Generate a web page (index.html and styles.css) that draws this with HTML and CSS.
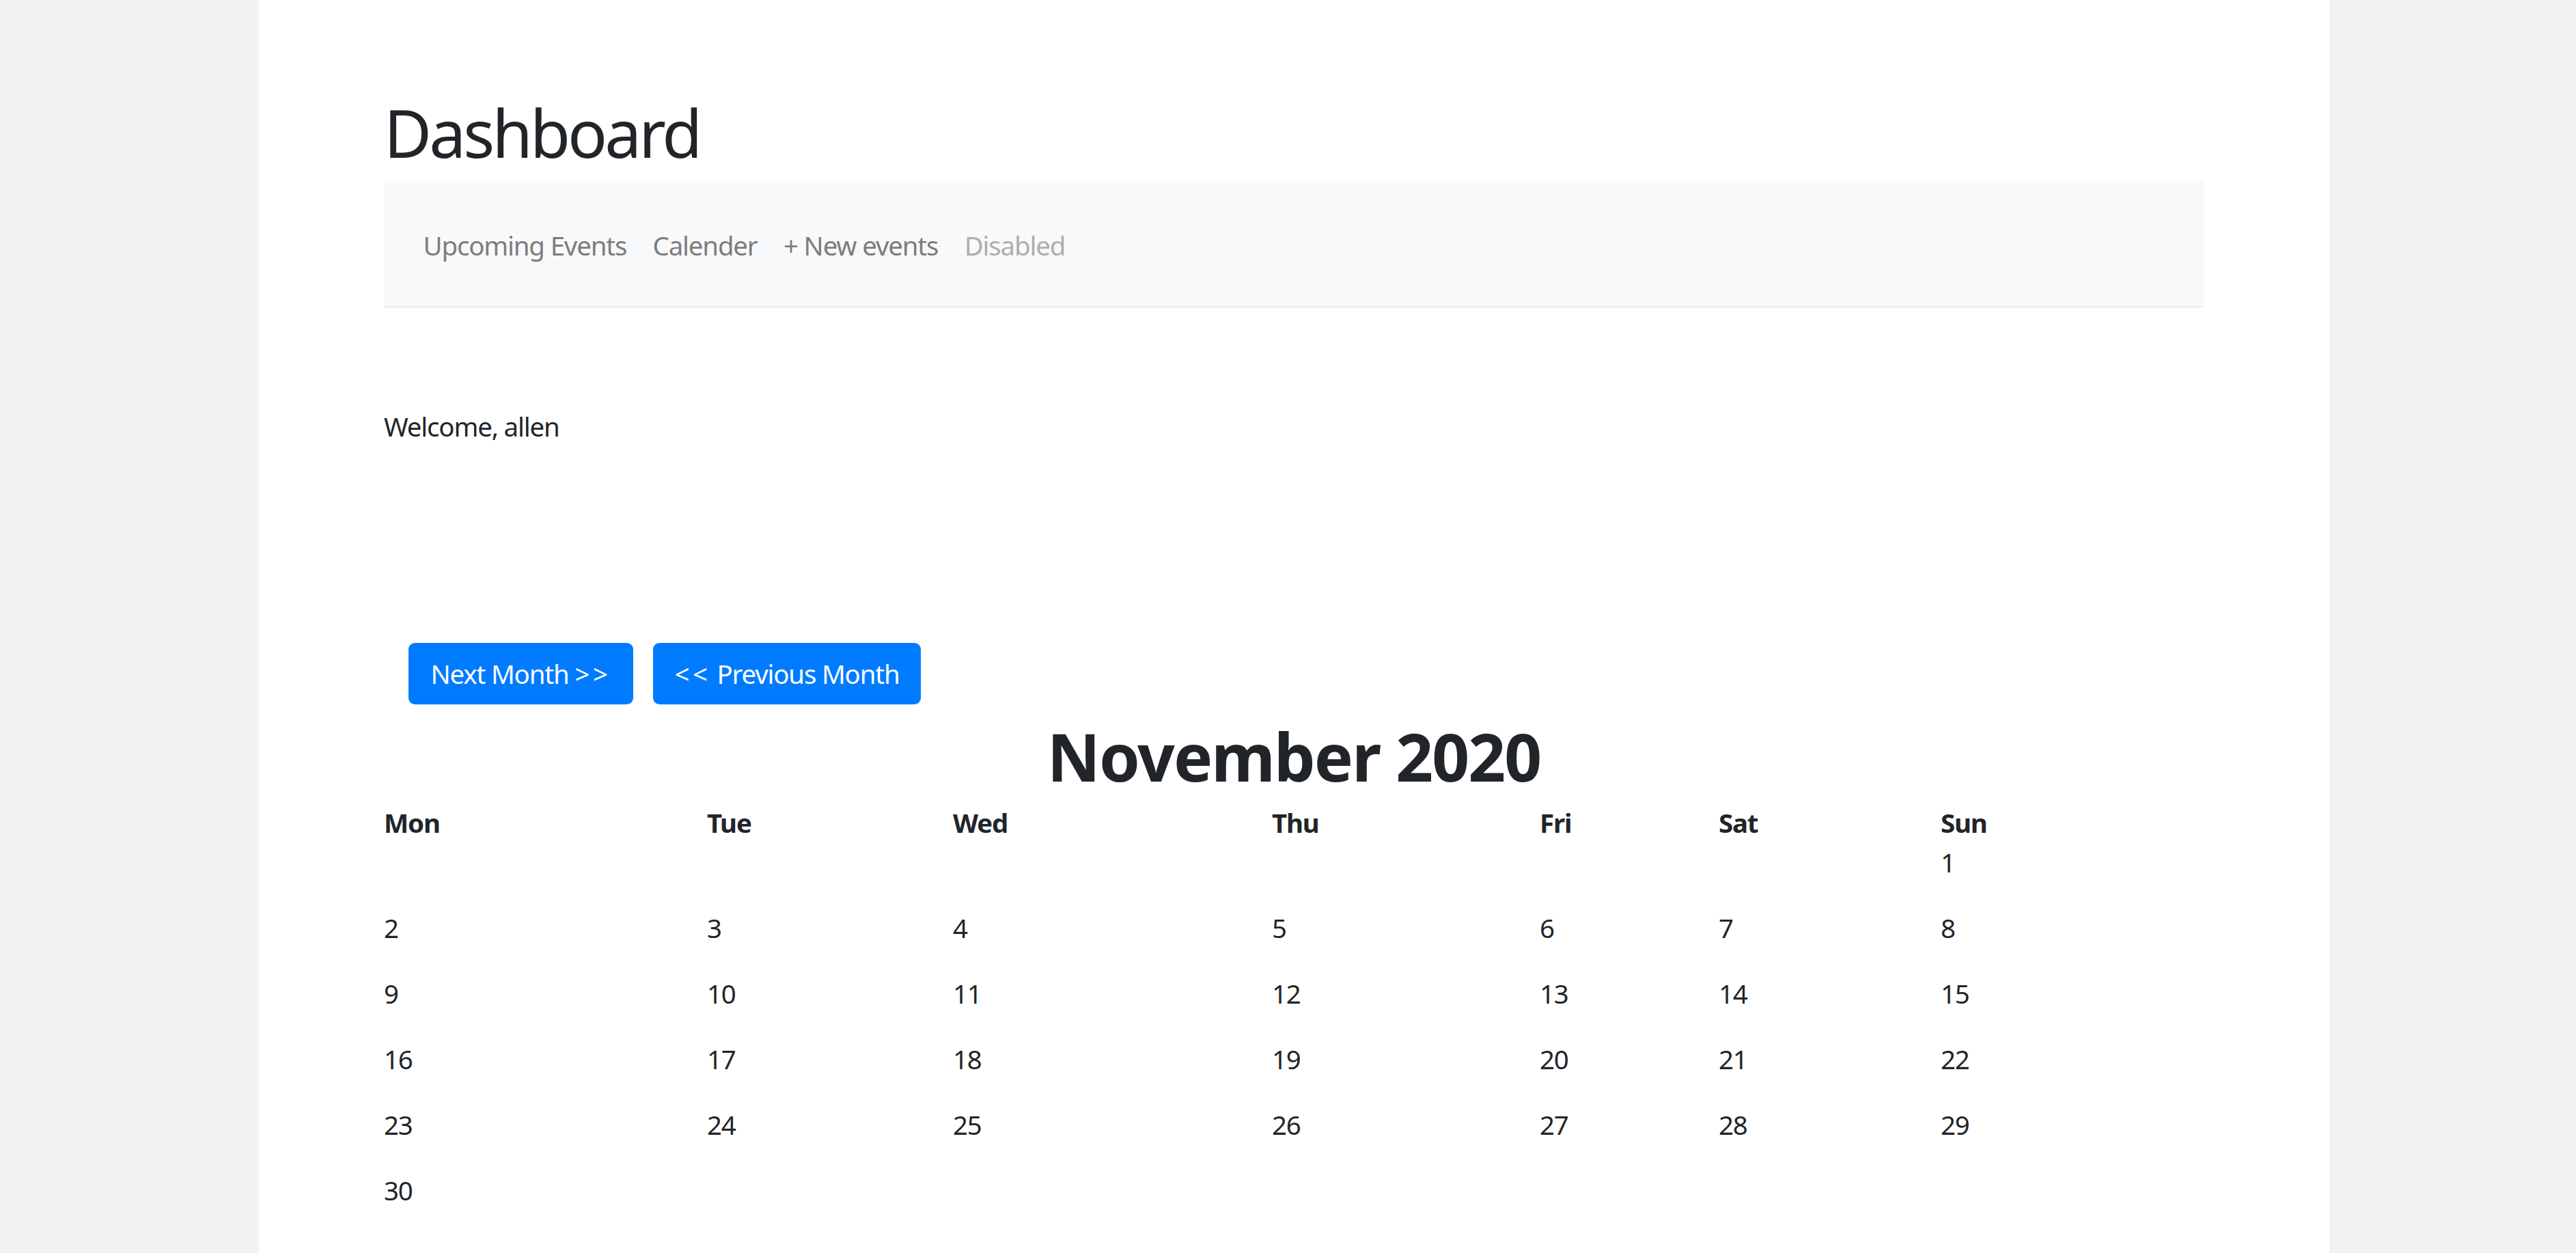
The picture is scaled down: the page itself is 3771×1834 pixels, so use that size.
FILE: index.html
```html
<!DOCTYPE html>
<html lang="en">
<head>
<meta charset="utf-8">
<title>Dashboard</title>
<link rel="stylesheet" href="styles.css">
</head>
<body>
<div class="page">
  <h1 class="title">Dashboard</h1>
  <nav class="navbar">
    <a class="nav-link" href="#">Upcoming Events</a>
    <a class="nav-link" href="#">Calender</a>
    <a class="nav-link" href="#">+ New events</a>
    <span class="nav-link disabled">Disabled</span>
  </nav>
  <p class="welcome">Welcome, allen</p>
  <div class="month-buttons">
    <button class="btn btn-next">Next Month <span class="arrows">&gt;&gt;</span></button>
    <button class="btn btn-prev"><span class="arrows">&lt;&lt;</span> Previous Month</button>
  </div>
  <h1 class="month-title">November 2020</h1>
  <div class="calendar">
    <div class="head">Mon</div><div class="head">Tue</div><div class="head">Wed</div><div class="head">Thu</div><div class="head">Fri</div><div class="head">Sat</div><div class="head">Sun</div>
    <div class="day"></div><div class="day"></div><div class="day"></div><div class="day"></div><div class="day"></div><div class="day"></div><div class="day">1</div>
    <div class="day">2</div><div class="day">3</div><div class="day">4</div><div class="day">5</div><div class="day">6</div><div class="day">7</div><div class="day">8</div>
    <div class="day">9</div><div class="day">10</div><div class="day">11</div><div class="day">12</div><div class="day">13</div><div class="day">14</div><div class="day">15</div>
    <div class="day">16</div><div class="day">17</div><div class="day">18</div><div class="day">19</div><div class="day">20</div><div class="day">21</div><div class="day">22</div>
    <div class="day">23</div><div class="day">24</div><div class="day">25</div><div class="day">26</div><div class="day">27</div><div class="day">28</div><div class="day">29</div>
    <div class="day">30</div>
  </div>
</div>
</body>
</html>
```

FILE: styles.css
```css
html, body {
  margin: 0;
  padding: 0;
}

body {
  background: #f3f2f1;
  font-family: "Noto Sans", "Open Sans", sans-serif;
  font-size: 38.4px;
  line-height: 57.6px;
  letter-spacing: -0.03em;
  color: #212529;
}

.page {
  margin-left: 379px;
  width: 3031px;
  min-height: 1834px;
  box-sizing: border-box;
  padding: 0 184px 0 183px;
  background: #ffffff;
  overflow: hidden;
}

.title {
  margin: 136px 0 14px;
  font-size: 96px;
  line-height: 115.2px;
  font-weight: 400;
  letter-spacing: -0.04em;
}

.navbar {
  display: flex;
  align-items: center;
  padding: 66px 38.4px 59.4px;
  background: #f8f9fa;
  border-bottom: 2px solid #eeebeb;
}

.nav-link {
  padding: 0 19.2px;
  color: #7c7d7e;
  text-decoration: none;
}

.nav-link.disabled {
  color: #adaeaf;
}

.welcome {
  margin: 146px 0 0;
}

.month-buttons {
  display: flex;
  gap: 29px;
  margin-top: 287px;
  padding-left: 36px;
}

.btn {
  height: 90px;
  padding: 2px 0 0;
  border: 0;
  border-radius: 9.6px;
  background: #007bff;
  color: #ffffff;
  font-family: inherit;
  font-size: 38.4px;
  line-height: 57.6px;
  letter-spacing: -0.03em;
}

.arrows {
  letter-spacing: 0.12em;
}

.btn-next {
  width: 329px;
}

.btn-prev {
  width: 392px;
}

.month-title {
  margin: 18px 0 12px;
  text-align: center;
  font-size: 96px;
  line-height: 115.2px;
  font-weight: 700;
  letter-spacing: -0.02em;
}

.calendar {
  display: grid;
  grid-template-columns: 473px 360px 467px 392px 262px 325px 1fr;
}

.head {
  font-weight: 700;
  height: 57.6px;
}

.day {
  height: 96px;
}
```
